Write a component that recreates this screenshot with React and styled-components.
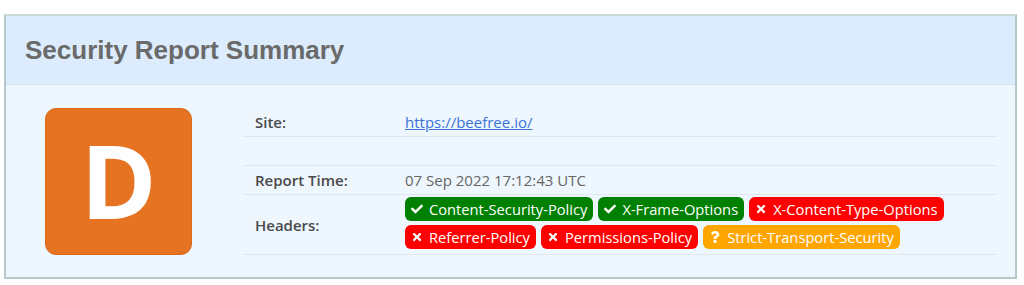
import React from 'react';
import styled, { createGlobalStyle } from 'styled-components';
import { FaCheck, FaTimes, FaQuestion } from 'react-icons/fa';

const GlobalStyle = createGlobalStyle`
    body {
        margin: 0;
        background: #ffffff;
        font-family: "Open Sans", sans-serif;
    }
`;

const Page = styled.div`
    padding: 14px 6px 0 4px;
`;

const Panel = styled.section`
    width: 1009px;
    height: 261px;
    border: 2px solid #b4c9c9;
    border-top-color: #cbdada;
    background-color: #eef6fe;
    display: flex;
    flex-direction: column;
`;

const Header = styled.header`
    height: 68px;
    background-color: #dcecfc;
    border-bottom: 1px solid #cfe0f0;
    display: flex;
    align-items: center;
    padding-left: 19px;
`;

const Title = styled.h1`
    margin: 0;
    font-family: "Liberation Sans", Arial, sans-serif;
    font-size: 26px;
    font-weight: 700;
    color: #6a6a6a;
`;

const Body = styled.div`
    display: flex;
    padding: 23px 18px 0 39px;
    gap: 51px;
`;

const Grade = styled.div`
    width: 145px;
    height: 141px;
    padding-bottom: 4px;
    flex: none;
    border: 1px solid #d9691c;
    border-radius: 11px;
    background-color: #e57322;
    color: #ffffff;
    display: flex;
    align-items: center;
    justify-content: center;
    font-size: 103px;
    font-weight: 700;
    line-height: 1;
`;

const Table = styled.div`
    flex: 1;
    display: flex;
    flex-direction: column;
`;

const Row = styled.div`
    display: grid;
    grid-template-columns: 162px 1fr;
    align-items: center;
    min-height: ${({ h }) => h}px;
    border-bottom: 1px solid #dfe7ef;
    font-size: 15px;
`;

const Label = styled.div`
    padding-left: 12px;
    font-weight: 600;
    color: #4a4a4a;
`;

const Value = styled.div`
    color: #666666;
`;

const SiteLink = styled.a`
    color: #3b73d9;
    text-decoration: underline;
`;

const Badges = styled.div`
    display: flex;
    flex-wrap: wrap;
    gap: 4px 5px;
    padding: 2px 0 5px;
`;

const colors = {
    pass: '#008000',
    fail: '#ff0000',
    warn: '#ffa500',
};

const Badge = styled.span`
    display: inline-flex;
    align-items: center;
    gap: 6px;
    height: 24px;
    padding: 0 6px;
    border-radius: 6px;
    background-color: ${({ status }) => colors[status]};
    color: #ffffff;
    font-size: 14.7px;
    svg {
        font-size: 12px;
    }
`;

const headers = [
    { name: 'Content-Security-Policy', status: 'pass' },
    { name: 'X-Frame-Options', status: 'pass' },
    { name: 'X-Content-Type-Options', status: 'fail' },
    { name: 'Referrer-Policy', status: 'fail' },
    { name: 'Permissions-Policy', status: 'fail' },
    { name: 'Strict-Transport-Security', status: 'warn' },
];

const icons = {
    pass: <FaCheck />,
    fail: <FaTimes />,
    warn: <FaQuestion />,
};

const App = () => {
    return (
        <Page>
            <GlobalStyle />
            <Panel>
                <Header>
                    <Title>Security Report Summary</Title>
                </Header>
                <Body>
                    <Grade>D</Grade>
                    <Table>
                        <Row h={28}>
                            <Label>Site:</Label>
                            <Value>
                                <SiteLink href="#">https://beefree.io/</SiteLink>
                            </Value>
                        </Row>
                        <Row h={28} />
                        <Row h={28}>
                            <Label>Report Time:</Label>
                            <Value>07 Sep 2022 17:12:43 UTC</Value>
                        </Row>
                        <Row h={59}>
                            <Label>Headers:</Label>
                            <Badges>
                                {headers.map((h) => (
                                    <Badge key={h.name} status={h.status}>
                                        {icons[h.status]}
                                        {h.name}
                                    </Badge>
                                ))}
                            </Badges>
                        </Row>
                    </Table>
                </Body>
            </Panel>
        </Page>
    );
};

export default App;
